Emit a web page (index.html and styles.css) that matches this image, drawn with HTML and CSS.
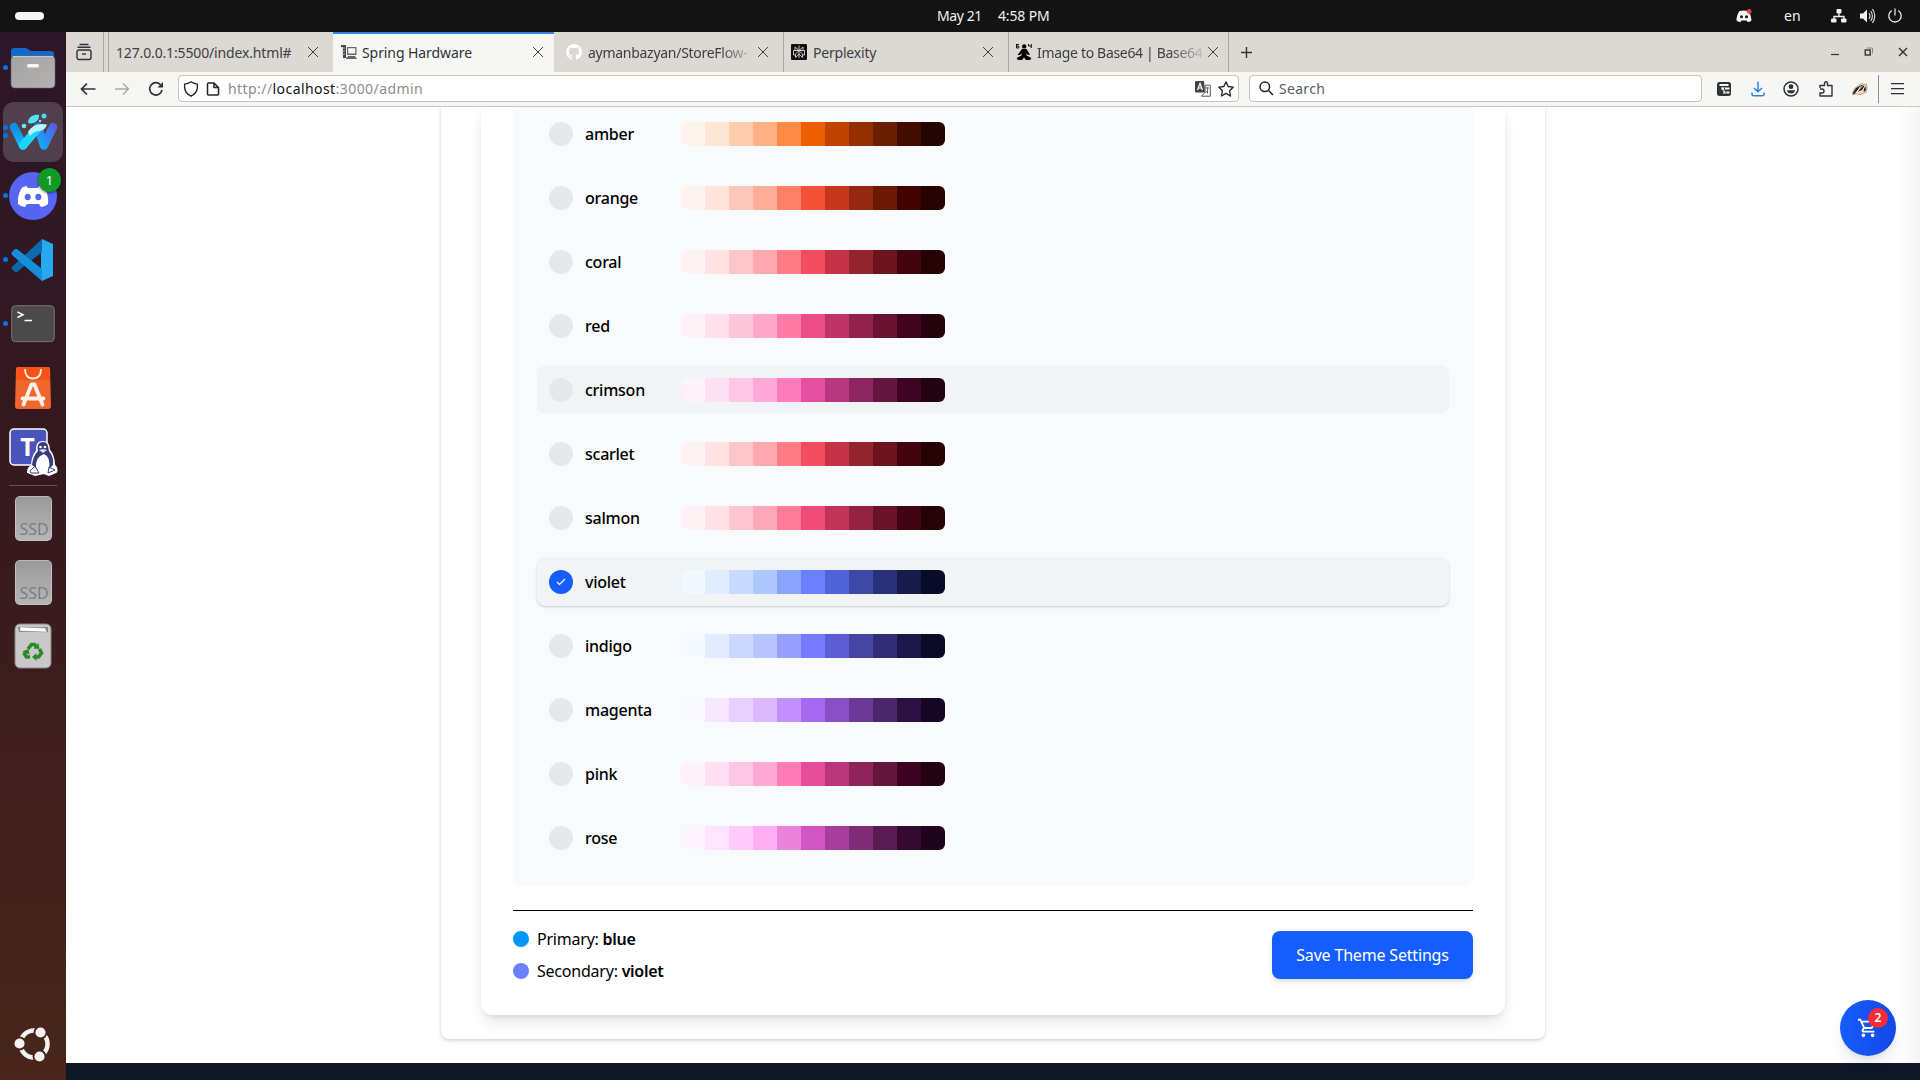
FILE: index.html
```html
<!DOCTYPE html>
<html lang="en">
<head>
<meta charset="utf-8">
<title>Spring Hardware</title>
<link rel="stylesheet" href="styles.css">
</head>
<body>
<header class="topbar">
  <span class="pill"></span>
  <div class="clock"><span class="date">May 21</span><span class="time">4:58 PM</span></div>
  <div class="tray">
    <svg class="tray-discord" width="16" height="14" viewBox="0 0 16 14"><path d="M3.500 2Q8 .8 12 2Q15 5 15.500 11.500Q14 13 11.500 13L10.500 11.500H5.500L4.500 13Q2 13 .5 11.500Q.5 6 3.500 2Z" fill="#f2f2f2"/><circle cx="5.500" cy="7.800" r="1.500" fill="#131313"/><circle cx="10.500" cy="7.800" r="1.500" fill="#131313"/><circle cx="13.200" cy="2.500" r="2.400" fill="#ed4245"/></svg>
    <span class="lang">en</span>
    <svg class="tray-net" width="16" height="16" viewBox="0 0 16 16" fill="#f2f2f2"><rect x="5.500" y="1" width="5" height="4.500" rx="1"/><rect x="0" y="10.500" width="5.500" height="4" rx="1"/><rect x="10" y="10.500" width="5.500" height="4" rx="1"/><path d="M8 5V8M3 11V8.500H13V11" fill="none" stroke="#f2f2f2" stroke-width="1.300"/></svg>
    <svg class="tray-vol" width="16" height="16" viewBox="0 0 16 16"><path d="M0 5.500H3L7 1.500V14.500L3 10.500H0Z" fill="#f2f2f2"/><path d="M9 5Q11 8 9 11M10.800 3Q14 8 10.800 13M12.500 1Q17 8 12.500 15" fill="none" stroke="#d6d6d6" stroke-width="1.200"/></svg>
    <svg width="16" height="16" viewBox="0 0 16 16" fill="none" stroke="#e6e6e6" stroke-width="1.300"><path d="M4.800 2.500A6.200 6.200 0 1 0 11.200 2.500M8 .5V7.500"/></svg>
  </div>
</header>

<div class="desktop">
<aside class="dock">
  <div class="app dot1">
    <svg width="48" height="48" viewBox="0 0 48 48"><defs><linearGradient id="fg" x1="0" y1="0" x2="1" y2="1"><stop offset="0" stop-color="#a3a3a3"/><stop offset="1" stop-color="#b5b3b1"/></linearGradient></defs><path d="M2 16V7Q2 4 5 4H17L22 7H42Q45 7 45 10V20H2Z" fill="#116acb"/><rect x="2" y="12" width="44" height="32" rx="4" fill="url(#fg)" stroke="#70686a" stroke-width=".6"/><path d="M4 12.500H44" stroke="#c9c9c9"/><rect x="18" y="20" width="12" height="3.500" rx="1.500" fill="#f5f5f5"/></svg>
  </div>
  <div class="app active dot2">
    <svg width="50" height="46" viewBox="0 0 50 46"><defs><linearGradient id="w1" x1="0" y1="0" x2="0" y2="1"><stop offset="0" stop-color="#0a8fe6"/><stop offset="1" stop-color="#1fb4f8"/></linearGradient><linearGradient id="w2" gradientUnits="userSpaceOnUse" x1="28" y1="30" x2="45" y2="16"><stop offset="0" stop-color="#14a6f8"/><stop offset="1" stop-color="#5560e2"/></linearGradient></defs><g fill="none" stroke-width="8.500" stroke-linecap="round" stroke-linejoin="round"><path d="M6 18L15 36.500" stroke="url(#w1)"/><path d="M30 18L36 36.500L45 18" stroke="url(#w2)"/><path d="M15 36.500L29 20" stroke="#16d6fa"/></g><path d="M20 23Q26 13 39 15.500Q37 22 31 22Q26 22 22 27Z" fill="#b5f4fb"/><path d="M20 14C20 7 27 5 31 6C32 11 26 16 20 14Z" fill="#4de4fa"/><circle cx="36" cy="7" r="2.500" fill="#3bdcf7"/><circle cx="16" cy="17" r="2.300" fill="#67e8fa"/><circle cx="32" cy="12" r="1.300" fill="#6ceafa"/></svg>
  </div>
  <div class="app dot1">
    <svg width="48" height="48" viewBox="0 0 48 48"><circle cx="24" cy="24" r="24" fill="#5865f2"/><path d="M17 14Q13 15 12 17Q8 25 9 32Q12 35 16 35L18 32H30L32 35Q36 35 39 32Q40 24 36 17Q34 14 30 14L29 16H19Z" fill="#fff"/><ellipse cx="18.700" cy="25" rx="3" ry="3.300" fill="#5865f2"/><ellipse cx="29.300" cy="25" rx="3" ry="3.300" fill="#5865f2"/></svg>
    <span class="count">1</span>
  </div>
  <div class="app dot1">
    <svg width="44" height="44" viewBox="0 0 44 44"><path d="M31 1L42 6V38L31 43L30 32V12Z" fill="#29a8f2"/><path d="M31 1L1 29Q0 30 1 31L4 34Q5 34 6 34L31 14Z" fill="#0b69b0"/><path d="M1 14L4 11L6 11L31 31V43L1 17Q0 15 1 14Z" fill="#168fd9"/></svg>
  </div>
  <div class="app dot1">
    <svg width="44" height="38" viewBox="0 0 44 38"><rect x=".7" y=".7" width="42.600" height="36" rx="4" fill="#4a4a4a" stroke="#777"/><path d="M6.500 7L12 9.700L6.500 12.500M13.500 15.500H21" fill="none" stroke="#fff" stroke-width="1.500"/></svg>
  </div>
  <div class="app">
    <svg width="38" height="44" viewBox="0 0 38 44"><path d="M4 1H34Q36 1 36 3L37 40Q37 43 34 43H4Q1 43 1 40L2 3Q2 1 4 1Z" fill="#f0662c"/><path d="M3 1H35L36 14H2Z" fill="#f95118"/><path d="M11 3Q11 12.500 19 12.500Q27 12.500 27 3" fill="none" stroke="#fff0e8" stroke-width="1.800"/><path d="M9.500 38.500L17.500 18.500H20.500L28.500 38.500M8.500 32.500H29.500" fill="none" stroke="#fff0e8" stroke-width="3.800" stroke-linejoin="round" stroke-linecap="round"/></svg>
  </div>
  <div class="app">
    <svg width="50" height="50" viewBox="0 0 50 50"><rect x="2" y="2" width="37" height="36" rx="4" fill="#4b53bc" stroke="#fff" stroke-width="1.500"/><text x="19.500" y="29" class="teams">T</text><path d="M35 15C41 15 41 20 41 23Q46 29 46 38Q50 42 48 45L41 48L36 46L27 48L20 45Q20 41 24 39Q24 30 29 24C29 19 29 15 35 15Z" fill="#fff" stroke="#fff" stroke-width="2"/><path d="M35 15C41 15 40 21 41 24Q46 30 45 38L41 42Q43 30 36 27Q27 30 28 41L24 38Q25 29 30 24C29 19 30 15 35 15Z" fill="#353d7a"/><circle cx="32.500" cy="20" r="1.300" fill="#fff"/><circle cx="37" cy="20" r="1.300" fill="#fff"/><path d="M31 23L35 22L39 23L35 26Z" fill="#dde"/><path d="M22 44L27 39L31 46L23 46ZM40 46L41 40L47 43Z" fill="none" stroke="#353d7a"/></svg>
  </div>
  <div class="dock-sep"></div>
  <div class="app"><div class="drive">SSD</div></div>
  <div class="app"><div class="drive">SSD</div></div>
  <div class="app">
    <svg width="38" height="46" viewBox="0 0 38 46"><rect x="1" y="1" width="36" height="44" rx="5" fill="#c9c9c9" stroke="#8c8582"/><path d="M4 4H34V9H5Z" fill="#888"/><path d="M6 4L31 5L33 9L6 8Z" fill="#fff" stroke="#777" stroke-width=".4"/><g fill="none" stroke="#2a8a25" stroke-width="3.600"><path d="M14 26L17.500 21.500H20.500L22 23.500"/><path d="M25.500 26L27.500 30L24.500 34H22"/><path d="M16 34H12.500L10.500 31L12 28.500"/></g><path d="M19.500 25.500L25.500 26L24.500 20ZM22.500 30V38L18 34ZM8.500 28.500L14.500 26L15.500 31.500Z" fill="#2a8a25"/></svg>
  </div>
  <div class="launcher">
    <svg width="40" height="40" viewBox="0 0 40 40"><circle cx="21" cy="20" r="13.500" fill="none" stroke="#f5f3f2" stroke-width="4.500"/><g fill="#f5f3f2" stroke="#46241a" stroke-width="1.800"><circle cx="6.500" cy="19.500" r="6"/><circle cx="27.500" cy="8.500" r="6"/><circle cx="26.500" cy="32.500" r="6"/></g></svg>
  </div>
</aside>

<section class="browser">
  <div class="tabs">
    <div class="tab-list"><svg width="16" height="18" viewBox="0 0 16 18" fill="none" stroke="#2e3436" stroke-width="1.400"><path d="M3.500 1.500H12.500M1.500 4.200H14.500"/><rect x="1" y="7" width="14" height="9.500" rx="2"/><path d="M6 11H10"/></svg></div>
    <div class="tab t1"><span class="title">127.0.0.1:5500/index.html#</span><i class="x"></i></div>
    <div class="tab t2 current"><svg width="16" height="16" viewBox="0 0 16 16" fill="#666"><path d="M0 1H5V14H2V3H0Z" fill="#444"/><path d="M6 3H15.500V11H6ZM5 14L7.500 12H14L16 15H5Z"/><path d="M7.200 4.200H14.300V9.500H7.200Z" fill="#f6f6f4"/><path d="M1 4H4M1 7H4M1 10H4" stroke="#bbb"/></svg><span class="title">Spring Hardware</span><i class="x"></i></div>
    <div class="tab t3"><svg width="16" height="16" viewBox="0 0 16 16"><path d="M8 0a8 8 0 0 0-2.530 15.590c.4.070.550-.170.550-.380v-1.490c-2.010.370-2.530-.490-2.690-.940-.1-.230-.480-.940-.820-1.130-.280-.150-.680-.520-.010-.530.630-.010 1.080.580 1.230.820.720 1.210 1.870.870 2.330.660.070-.520.280-.870.510-1.070-1.780-.2-3.640-.890-3.640-3.950 0-.870.310-1.590.820-2.150-.080-.2-.360-1.020.080-2.120 0 0 .670-.210 2.200.820a7.500 7.500 0 0 1 4 0c1.530-1.040 2.200-.820 2.200-.820.440 1.100.160 1.920.080 2.120.510.560.820 1.270.820 2.150 0 3.070-1.870 3.750-3.650 3.950.290.250.540.730.540 1.480v2.200c0 .210.150.460.550.380A8 8 0 0 0 8 0z" fill="#fff"/></svg><span class="title fade">aymanbazyan/StoreFlow-</span><i class="x"></i></div>
    <div class="tab t4"><svg width="16" height="16" viewBox="0 0 16 16"><rect width="16" height="16" rx="1" fill="#111"/><path d="M8 1.500V14M4 3L8 6.500L12 3V6.500H4ZM2.500 6.500H13.500V11H11.500M2.500 6.500V11H4.500M8 6.500L4.500 10V13.500L8 10L11.500 13.500V10Z" fill="none" stroke="#d5d5d5" stroke-width=".9"/></svg><span class="title">Perplexity</span><i class="x"></i></div>
    <div class="tab t5"><svg width="16" height="16" viewBox="0 0 16 16"><path d="M.5 0V4M.5 .5H3M.5 2.200H2.800V4H.5M12.500 0V2H15.500M15.300 0V4" stroke="#111" fill="none"/><circle cx="8.200" cy="2.400" r="2.200"/><path d="M6 5H10.500L14 10.500L12 11L10.500 9.500V11.500L15.500 14L14 16H10L8 13.500L6 16H2L.5 14L5.500 11.500V9L4 11H1.500Z"/></svg><span class="title fade">Image to Base64 | Base64</span><i class="x"></i></div>
    <div class="newtab"><svg width="13" height="13" viewBox="0 0 13 13" stroke="#2e3436" stroke-width="1.400"><path d="M6.500 1V12M1 6.500H12"/></svg></div>
    <div class="win">
      <svg width="8" height="12" viewBox="0 0 8 12" stroke="#2e3436" stroke-width="1.200"><path d="M0 8.500H8"/></svg>
      <svg width="9" height="10" viewBox="0 0 9 10" fill="none" stroke="#2e3436"><rect x="1.200" y="3" width="5" height="5" stroke-width="1.400"/><path d="M3 1H8.500V6.500" stroke="#888"/></svg>
      <svg width="10" height="10" viewBox="0 0 10 10" stroke="#2e3436" stroke-width="1.400"><path d="M1 1L9 9M9 1L1 9"/></svg>
    </div>
  </div>

  <div class="toolbar">
    <div class="nav">
      <svg width="16" height="16" viewBox="0 0 16 16" fill="none" stroke="#2e3436" stroke-width="1.700"><path d="M15.500 8H1.500M7 2.500L1.500 8L7 13.500"/></svg>
      <svg width="16" height="16" viewBox="0 0 16 16" fill="none" stroke="#aaaba9" stroke-width="1.500"><path d="M1 8H14.500M9 2.500L14.500 8L9 13.500"/></svg>
      <svg width="16" height="16" viewBox="0 0 16 16" fill="none" stroke="#2e3436" stroke-width="1.600"><path d="M14 9A6.200 6.200 0 1 1 12.500 3.700"/><path d="M9.500 6.500H15V1Z" fill="#2e3436" stroke="none"/></svg>
    </div>
    <div class="url">
      <svg width="16" height="16" viewBox="0 0 16 16" fill="none" stroke="#222" stroke-width="1.300"><path d="M8 .8Q11 2.800 14.300 3.200Q15.500 11.500 8 15.200Q.5 11.500 1.700 3.200Q5 2.800 8 .8Z"/></svg>
      <svg width="14" height="14" viewBox="0 0 14 14" fill="none" stroke="#222" stroke-width="1.500" stroke-linejoin="round"><path d="M2.500 1H8L12.500 5.500V12Q12.500 13 11.500 13H2.500Q1.500 13 1.500 12V2Q1.500 1 2.500 1ZM8 1V5.500H12.500"/></svg>
      <span class="address">http://<b>localhost</b>:3000/admin</span>
      <svg class="translate" width="16" height="16" viewBox="0 0 16 16"><path d="M1 0H9L10 11.500H1Q0 11.500 0 10.500V1Q0 0 1 0Z" fill="#444"/><path d="M10.200 4.200H15.300V15.200H6.500L10 11.500Z" fill="#fff" stroke="#555"/><path d="M2.500 9L5 2.500L7.500 9M3.500 7H6.500" stroke="#fff" stroke-width="1.200" fill="none"/><path d="M11 7H14M12.500 6.500V7.500Q13.500 9.500 11 11.500M12.500 10V12.500" stroke="#555" fill="none"/></svg>
      <svg width="16" height="16" viewBox="0 0 16 16" fill="none" stroke="#222" stroke-width="1.300" stroke-linejoin="round"><path d="M8 .9L10.200 5.500L15.200 6.200L11.600 9.700L12.500 15L8 12.400L3.500 15L4.400 9.700L.8 6.200L5.800 5.500Z"/></svg>
    </div>
    <div class="search"><svg width="15" height="15" viewBox="0 0 15 15" fill="none" stroke="#222" stroke-width="1.500"><circle cx="5.800" cy="5.800" r="4.800"/><path d="M9.500 9.500L14 14"/></svg><span>Search</span></div>
    <div class="tools">
      <svg width="16" height="16" viewBox="0 0 16 16"><rect x="1" y="1" width="14" height="14" rx="2.500" fill="#2e3436"/><path d="M3.500 4H12.500M5.500 7.500H13.500M7.500 11.500H13.500" stroke="#f6f6f4" stroke-width="1.800"/><path d="M6 6V8.500L8 9.500V12.500" stroke="#f6f6f4" stroke-width=".9" fill="none"/><path d="M8 7.500H9M9.500 11.500H10.500" stroke="#2e3436"/></svg>
      <svg width="14" height="16" viewBox="0 0 14 16" fill="none" stroke="#2f83e4" stroke-width="1.500"><path d="M7 .5V10.500M3 7L7 10.800L11 7M1 11.500V13.500Q1 14.700 2.500 14.700H11.500Q13 14.700 13 13.500V11.500"/></svg>
      <svg width="16" height="16" viewBox="0 0 16 16"><circle cx="8" cy="8" r="7" fill="none" stroke="#2e3436" stroke-width="1.500"/><circle cx="8" cy="5.700" r="2.400" fill="#2e3436"/><path d="M4 9.300H12Q11.500 12.600 8 12.600Q4.500 12.600 4 9.300Z" fill="#2e3436"/></svg>
      <svg width="16" height="16" viewBox="0 0 16 16" fill="none" stroke="#2e3436" stroke-width="1.400" stroke-linejoin="round"><path d="M2 7V4.500H6.500V2.800Q6.500 .8 8 .8Q9.500 .8 9.500 2.800V4.500H14V15H2V12H4Q6 12 6 10Q6 8 4 8H2"/></svg>
      <svg width="16" height="14" viewBox="0 0 16 14"><path d="M0 11.500L3 6L8 3L10 1.500L12 2.500L14.500 2L15 6L14 10.500L10 11.500L8 13L5 11.500L1 13Z" fill="#f1e3d2" stroke="#c98a55" stroke-width=".8"/><path d="M.5 11.500L4 6L8.500 3.500L5.500 8.500L2.500 12ZM9 3L12.500 4L10 8L5.500 10L8 6.500ZM13.500 4L14 8L11.500 10.500L12 7Z" fill="#222"/><path d="M4 10.500L10.500 4" stroke="#fff" stroke-width=".9"/></svg>
    </div>
    <div class="menu"><i></i><i></i><i></i></div>
  </div>

  <main class="page">
    <div class="outer">
      <div class="card">
        <div class="panel" id="palette"></div>
        <div class="footer-row">
          <div class="chosen">
            <div class="choice"><i class="dot primary"></i><span>Primary: <b>blue</b></span></div>
            <div class="choice"><i class="dot secondary"></i><span>Secondary: <b>violet</b></span></div>
          </div>
          <button class="save">Save Theme Settings</button>
        </div>
      </div>
    </div>
    <div class="drawer-edge"></div>
    <div class="cart">
      <svg width="24" height="24" viewBox="0 0 24 24" fill="#fff"><path d="M15.550 13c.750 0 1.410-.410 1.750-1.030l3.580-6.490A.996.996 0 0 0 20.010 4H5.210l-.940-2H1v2h2l3.600 7.590-1.350 2.440C4.520 15.370 5.480 17 7 17h12v-2H7l1.100-2h7.450zM6.160 6h12.150l-2.760 5H8.530L6.160 6zM7 18c-1.100 0-1.990.9-1.990 2S5.900 22 7 22s2-.9 2-2-.9-2-2-2zm10 0c-1.100 0-1.990.9-1.990 2s.890 2 1.990 2 2-.9 2-2-.9-2-2-2z"/></svg>
      <span class="badge">2</span>
    </div>
    <footer class="site-footer"></footer>
  </main>
</section>
</div>
<script src="palette.js"></script>
</body>
</html>
```
FILE: styles.css
```css
* { box-sizing: border-box; }
body { margin: 0; width: 1920px; height: 1080px; overflow: hidden; font-family: "Noto Sans", "Open Sans", sans-serif; background: #fff; color: #000; }
svg { display: block; flex: none; }
b { font-weight: inherit; }

.topbar { height: 32px; background: #131313; color: #f2f2f2; display: grid; grid-template-columns: 937px 130px 1fr; align-items: center; font-size: 14px; line-height: 30px; }
.pill { width: 29px; height: 8px; border-radius: 4px; background: #f5f5f5; margin-left: 15px; }
.clock { display: flex; gap: 17px; white-space: nowrap; }
.date { width: 44px; letter-spacing: -.4px; }
.time { letter-spacing: -.15px; }
.tray { display: flex; align-items: center; justify-content: flex-end; padding-right: 17px; }
.tray-discord { margin-right: 32px; }
.lang { width: 17px; margin-right: 30px; }
.tray-net { margin-right: 13px; }
.tray-vol { margin-right: 11px; }

.desktop { display: flex; height: 1048px; }
.dock { width: 66px; background: linear-gradient(#2d1628, #35191f 40%, #3d1e1e 65%, #48261a); display: flex; flex-direction: column; align-items: center; padding-top: 4px; flex: none; }
.app { width: 66px; height: 64px; display: flex; align-items: center; justify-content: center; position: relative; flex: none; }
.app.active::before { content: ""; position: absolute; left: 3px; top: 2px; width: 60px; height: 60px; border-radius: 11px; background: #51404c; }
.app.active svg { position: relative; }
.dot1::after, .dot2::after { content: ""; position: absolute; left: 3px; top: 29px; width: 5px; height: 5px; border-radius: 50%; background: #0b72e7; }
.dot2::after { top: 25px; box-shadow: 0 8px #0b72e7; }
.count { position: absolute; left: 38px; top: 4px; width: 23px; height: 24px; border-radius: 50%; background: #129a26; color: #fff; font-size: 13px; line-height: 24px; text-align: center; box-shadow: 0 1px 3px #0008; }
.teams { font: bold 25px "Noto Sans", sans-serif; fill: #fff; text-anchor: middle; }
.dock-sep { width: 48px; height: 1px; background: #69514f; margin: 1px 0 0; flex: none; }
.drive { width: 37px; height: 45px; border-radius: 5px; background: linear-gradient(#999, #b6b6b6); border: 1px solid #c4c4c4; border-top-color: #bbb; color: #7d7d7d; font-size: 16px; line-height: 20px; padding: 22px 0 0 4px; }
.launcher { margin-top: auto; margin-bottom: 16px; }

.browser { flex: 1; display: flex; flex-direction: column; min-width: 0; }
.tabs { height: 40px; background: #dcd9d4; display: flex; color: #3c4042; font-size: 14px; flex: none; }
.tab-list { width: 38px; border-right: 1px solid #aaa6a0; display: flex; align-items: center; justify-content: center; padding-right: 1px; }
.tab { display: flex; align-items: center; padding: 0 10px 0 8px; gap: 6px; border-right: 1px solid #aaa6a0; white-space: nowrap; overflow: hidden; line-height: 39px; }
.title { flex: 1; letter-spacing: -.2px; }
.t1 { width: 225px; margin-left: 4px; border-left: 1px solid #aaa6a0; border-right: 0; padding-left: 7px; padding-right: 15px; }
.t1 .title { letter-spacing: -.15px; }
.t2 { width: 221px; border-right: 0; background: #f6f6f4; border-top: 2px solid #3584e4; line-height: 35px; color: #2e3436; padding-right: 11px; }
.t2 .title { letter-spacing: -.08px; margin-top: -2px; margin-left: -1px; }
.t2 svg, .t2 .x { position: relative; top: -1px; }
.t3 { width: 230px; padding-left: 12px; padding-right: 15px; }
.t3 .title { letter-spacing: -.28px; }
.t4 { width: 225px; padding-right: 15px; }
.t4 svg, .t5 svg { margin-left: -1px; }
.t5 { width: 220px; padding-right: 10px; gap: 5px; }
.t5 .title { letter-spacing: -.32px; }
.fade { -webkit-mask-image: linear-gradient(90deg, #000 80%, #0002); mask-image: linear-gradient(90deg, #000 80%, #0002); }
.x { width: 10px; height: 10px; flex: none; background: linear-gradient(45deg, transparent 46%, #3c4042 46%, #3c4042 54%, transparent 54%), linear-gradient(-45deg, transparent 46%, #3c4042 46%, #3c4042 54%, transparent 54%); }
.newtab { display: flex; align-items: center; padding-left: 11px; }
.win { display: flex; align-items: center; gap: 25px; margin-left: auto; padding-right: 12px; }

.toolbar { height: 35px; background: #f6f6f4; border-bottom: 1px solid #cbc7c0; display: flex; align-items: center; flex: none; font-size: 14px; padding-bottom: 1px; }
.nav { width: 112px; padding-left: 14px; display: flex; gap: 18px; }
.url, .search { height: 27px; background: #fff; border: 1px solid #c8c4bb; border-radius: 4px; display: flex; align-items: center; }
.url { width: 1061px; padding: 0 4px 0 4px; }
.url svg + svg { margin-left: 7px; }
.address { color: #8b8c8c; margin-left: 8px; letter-spacing: .43px; }
.address b { color: #111; }
.translate { margin-left: auto; }
.search { width: 453px; margin-left: 10px; padding-left: 9px; gap: 5px; color: #5a5d5e; letter-spacing: .3px; }
.tools { display: flex; align-items: center; gap: 18.500px; width: 177px; padding-left: 14px; height: 28px; border-right: 1px solid #8b8c8b; }
.menu { display: flex; flex-direction: column; gap: 4px; padding-left: 12px; }
.menu i { width: 13px; height: 1px; background: #2e3436; box-shadow: 0 .5px #2e343688; }

.page { flex: 1; position: relative; overflow: hidden; display: flex; flex-direction: column; background: #fff; }
.outer { width: 1104px; margin-left: 375px; height: 932px; padding: 0 40px 24px; border-radius: 0 0 8px 8px; background: #fff; box-shadow: 0 1px 3px #0000001a, 0 2px 4px #0000001a; display: flex; }
.card { flex: 1; border-radius: 0 0 12px 12px; background: #fff; padding: 0 32px; box-shadow: 0 10px 15px -3px #0000001a, 0 4px 6px -4px #0000001a, 0 0 12px #00000008; }
.panel { background: #f9fafc; height: 779px; border-radius: 0 0 8px 8px; padding: 3px 24px; display: flex; flex-direction: column; gap: 16px; }
.row { height: 48px; flex: none; display: flex; align-items: center; padding: 0 12px; border-radius: 8px; font-size: 16px; }
.row.hover, .row.selected { background: #f2f3f5; }
.row.selected { box-shadow: 0 1px 3px #0000001a, 0 1px 2px #0000001a; }
.radio { width: 24px; height: 24px; border-radius: 50%; background: #e5e7eb; display: flex; align-items: center; justify-content: center; }
.selected .radio { background: #155dfc; }
.name { width: 96px; margin-left: 12px; letter-spacing: -.25px; font-weight: 500; }
.swatches { display: flex; border-radius: 6px; overflow: hidden; }
.swatches i { width: 24px; height: 24px; }
.footer-row { margin-top: 24px; border-top: 1px solid #000; padding-top: 20px; display: flex; justify-content: space-between; align-items: flex-start; height: 69px; }
.chosen { display: flex; flex-direction: column; gap: 8px; margin-top: -4px; }
.choice { display: flex; align-items: center; gap: 8px; height: 24px; font-size: 16px; line-height: 24px; letter-spacing: -.22px; }
.choice b { font-weight: 600; letter-spacing: -.3px; }
.dot { width: 16px; height: 16px; border-radius: 50%; }
.primary { background: #0096ff; }
.secondary { background: #6a80ff; }
.save { width: 201px; height: 48px; border: 0; border-radius: 8px; background: #155dfc; color: #fff; font: 16px "Noto Sans", sans-serif; letter-spacing: -.18px; padding: 0; box-shadow: 0 4px 6px -1px #0000001a, 0 2px 4px -2px #0000001a; }
.site-footer { margin-top: auto; height: 17px; background: #101828; flex: none; }
.drawer-edge { position: absolute; right: 0; top: 0; width: 22px; height: 956px; background: linear-gradient(90deg, #0000, #0000000a); }
.cart { position: absolute; left: 1774px; top: 893px; width: 56px; height: 56px; border-radius: 50%; background: linear-gradient(90deg, #155dfc, #1447e6); display: flex; align-items: center; justify-content: center; box-shadow: 0 10px 15px -3px #0000001a, 0 4px 6px -4px #0000001a; }
.cart svg { width: 22px; height: 24px; }
.badge { position: absolute; left: 28px; top: 8px; width: 20px; height: 20px; border-radius: 50%; background: #fb2c36; color: #fff; font-size: 12px; font-weight: 600; line-height: 20px; text-align: center; }
```
FILE: palette.js
```js
const palette = {
  amber: "fff4ed ffe5d3 ffcdab ffb183 ff8a46 ec5e00 c04400 943000 6a1f00 420c00 250500",
  orange: "fff3f0 ffe2da ffc7bb ffad98 ff8067 f25236 c5381d 962710 6c1805 430400 270200",
  coral: "fff2f2 ffe1e2 ffc6c9 ffa9ae ff7c86 f24c60 c43347 952431 6b131f 42040d 260204",
  red: "fff2f6 ffe0ea ffc5d9 ffa8c8 ff7ba5 ec4d87 be3466 93224b 6a1330 41041a 25020c",
  crimson: "fff1fa ffe0f3 ffc6e6 ffa9d8 ff7cbb e54f9f b8367d 8d265e 651640 3d0424 230212",
  scarlet: "fff2f2 ffe1e2 ffc6c9 ffa9ae ff7c86 f24c60 c43347 952431 6b131f 42040d 260204",
  salmon: "fff2f4 ffe1e7 ffc5d1 ffa8bb ff7b97 ef4b77 c23358 942341 6a1328 420414 260208",
  violet: "f2f8ff e1edff c8dbff aec8ff 89a4ff 6a80ff 5062d8 3c49a6 283177 161b4a 090c29",
  indigo: "f3f9ff e3ecff cbd9ff b6c4ff 979fff 777bff 5d5ed6 4645a4 302d76 1b1849 0d0a28",
  magenta: "f9f7ff f4e7ff e8d1ff dcb8ff c390ff a769f2 894fc5 693898 4a266c 2b1242 180724",
  pink: "fff2f8 ffdff1 ffc6e3 ffa9d6 ff7cb7 e64d99 b93678 8e245a 65163c 3d0422 230211",
  rose: "fff3ff ffe3ff ffcbfa ffaef3 eb83dd d156c4 a73d9c 802c77 591b52 360a30 1f041c"
};
const state = { crimson: "hover", violet: "selected" };
const check = '<svg width="10" height="8" viewBox="0 0 10 8" fill="none" stroke="#fff" stroke-width="1.2"><path d="M1 4L3.500 6.500L9 1"/></svg>';
document.getElementById("palette").innerHTML = Object.entries(palette).map(([name, shades]) =>
  `<div class="row ${state[name] || ""}"><span class="radio">${state[name] === "selected" ? check : ""}</span><span class="name">${name}</span><span class="swatches">${shades.split(" ").map(c => `<i style="background:#${c}"></i>`).join("")}</span></div>`
).join("");
```
